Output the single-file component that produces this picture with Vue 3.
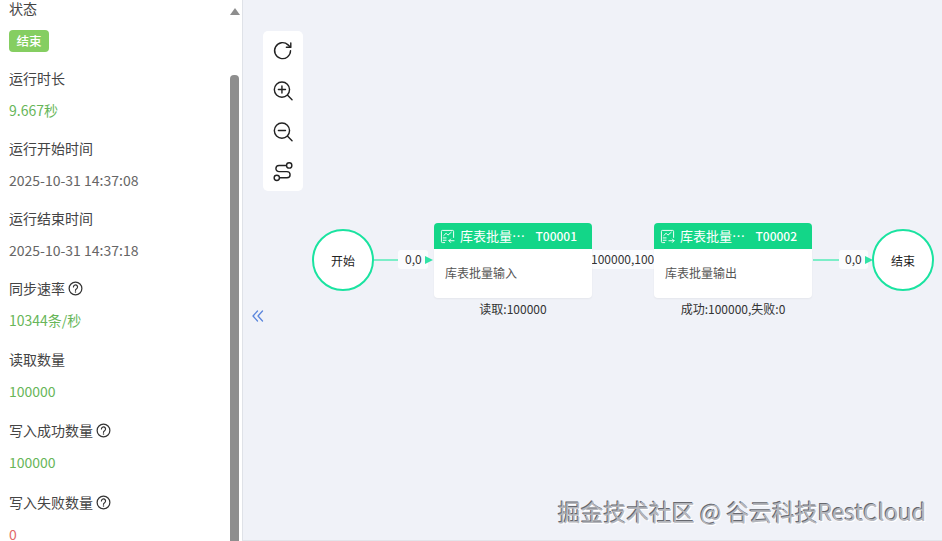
<script setup>
const metrics = [
  { label: '运行时长', value: '9.667秒', tone: 'green' },
  { label: '运行开始时间', value: '2025-10-31 14:37:08' },
  { label: '运行结束时间', value: '2025-10-31 14:37:18' },
  { label: '同步速率', value: '10344条/秒', tone: 'green', help: true, size: 'tall' },
  { label: '读取数量', value: '100000', tone: 'green', size: 'tall' },
  { label: '写入成功数量', value: '100000', tone: 'green', help: true, size: 'taller' },
  { label: '写入失败数量', value: '0', tone: 'red', help: true, size: 'tall' },
];
</script>

<template>
  <div class="page">
    <aside class="side">
      <div class="metric">
        <div class="label">状态</div>
        <div class="value"><span class="tag">结束</span></div>
      </div>
      <div v-for="item in metrics" :key="item.label" class="metric" :class="item.size">
        <div class="label">
          {{ item.label }}
          <svg v-if="item.help" class="help" viewBox="0 0 16 16" fill="none" stroke="#333" stroke-width="1.3">
            <circle cx="8" cy="8" r="6.8" />
            <path d="M5.8 6.4a2.2 2.2 0 1 1 3.4 1.8c-.8.5-1.2.9-1.2 1.7" stroke-linecap="round" />
            <circle cx="8" cy="11.8" r=".8" fill="#333" stroke="none" />
          </svg>
        </div>
        <div class="value" :class="item.tone">{{ item.value }}</div>
      </div>
      <i class="scroll-up"></i>
      <i class="scroll-thumb"></i>
    </aside>

    <main class="canvas">
      <div class="toolbar">
        <svg viewBox="0 0 24 24" fill="none" stroke="#222" stroke-width="1.6" stroke-linecap="round" stroke-linejoin="round">
          <path d="M20.5 12a9 9 0 1 1-2.8-6.5l2.8 2.6" />
          <path d="M20.8 3.2v5h-5" />
        </svg>
        <svg viewBox="0 0 24 24" fill="none" stroke="#222" stroke-width="1.6" stroke-linecap="round">
          <circle cx="10.8" cy="10.8" r="8.6" />
          <path d="M17.2 17.2l5 5M6.8 10.8h8M10.8 6.8v8" />
        </svg>
        <svg viewBox="0 0 24 24" fill="none" stroke="#222" stroke-width="1.6" stroke-linecap="round">
          <circle cx="10.8" cy="10.8" r="8.6" />
          <path d="M17.2 17.2l5 5M6.8 10.8h8" />
        </svg>
        <svg viewBox="0 0 24 24" fill="none" stroke="#222" stroke-width="1.6">
          <circle cx="19" cy="5" r="3" />
          <circle cx="5" cy="19" r="3" />
          <path d="M16 5H7.5a3.5 3.5 0 0 0 0 7h9a3.5 3.5 0 0 1 0 7H8" />
        </svg>
      </div>

      <svg class="collapse" viewBox="0 0 12 12" fill="none" stroke="#5b86dc" stroke-width="1.3" stroke-linecap="round" stroke-linejoin="round">
        <path d="M5.5 1L1 6l4.5 5M10.5 1L6 6l4.5 5" />
      </svg>

      <div class="circle start">开始</div>
      <i class="edge e1"></i>
      <span class="edge-label l1">0,0</span>
      <i class="arrow a1"></i>

      <span class="edge-label l2">100000,100000</span>

      <div class="node n1">
        <div class="node-head">
          <svg viewBox="0 0 16 16" fill="none" stroke="#fff" stroke-width="1" stroke-linecap="round" stroke-linejoin="round">
            <path d="M5 14.5H2.5a1 1 0 0 1-1-1v-11a1 1 0 0 1 1-1h11a1 1 0 0 1 1 1V9" />
            <path d="M4 7l2.5-2.5L8.5 6.5 12 3.5M3.5 9.5h3M3.5 12h3" />
            <path d="M15 12.5H9.5l1.8-1.8M9.5 12.5l1.8 1.8" />
          </svg>
          <span class="node-name">库表批量…</span>
          <span class="node-id">T00001</span>
        </div>
        <div class="node-body">库表批量输入</div>
        <div class="node-foot">读取:100000</div>
      </div>

      <div class="node n2">
        <div class="node-head">
          <svg viewBox="0 0 16 16" fill="none" stroke="#fff" stroke-width="1" stroke-linecap="round" stroke-linejoin="round">
            <path d="M5 14.5H2.5a1 1 0 0 1-1-1v-11a1 1 0 0 1 1-1h11a1 1 0 0 1 1 1V9" />
            <path d="M4 7l2.5-2.5L8.5 6.5 12 3.5M3.5 9.5h3M3.5 12h3" />
            <path d="M9.5 12.5H15l-1.8-1.8M15 12.5l-1.8 1.8" />
          </svg>
          <span class="node-name">库表批量…</span>
          <span class="node-id">T00002</span>
        </div>
        <div class="node-body">库表批量输出</div>
        <div class="node-foot">成功:100000,失败:0</div>
      </div>

      <i class="edge e2"></i>
      <span class="edge-label l3">0,0</span>
      <i class="arrow a2"></i>
      <div class="circle end">结束</div>

      <div class="watermark">掘金技术社区 @ 谷云科技RestCloud</div>
    </main>
  </div>
</template>

<style scoped>
.page {
  display: flex;
  width: 942px;
  height: 541px;
  overflow: hidden;
  font-family: "Noto Sans CJK SC", "Noto Sans", sans-serif;
  font-size: 14px;
  color: #333;
  background: #f0f2f8;
}

.side {
  position: relative;
  flex: none;
  width: 243px;
  height: 541px;
  padding: 0 0 0 9px;
  box-sizing: border-box;
  overflow: hidden;
  background: #fff;
  border-right: 1px solid #dfe2e8;
}

.metric {
  height: 70px;
}

.metric.tall {
  height: 71px;
}

.metric.taller {
  height: 72px;
}

.label {
  display: flex;
  align-items: center;
  gap: 3px;
  height: 17px;
  line-height: 17px;
  color: #444;
}

.value {
  margin-top: 14px;
  height: 19px;
  line-height: 19px;
  color: #666;
}

.value.green {
  color: #67b659;
}

.value.red {
  color: #e26a6a;
}

.help {
  width: 15px;
  height: 15px;
}

.tag {
  display: block;
  width: 40px;
  height: 22px;
  margin-top: -1px;
  line-height: 22px;
  border-radius: 4px;
  text-align: center;
  font-size: 12.5px;
  font-weight: 500;
  color: #fff;
  background: #85ce61;
}

.scroll-up {
  position: absolute;
  left: 230px;
  top: 8px;
  width: 0;
  height: 0;
  border-left: 5px solid transparent;
  border-right: 5px solid transparent;
  border-bottom: 7px solid #8e8e8e;
}

.scroll-thumb {
  position: absolute;
  left: 230px;
  top: 75px;
  bottom: 0;
  width: 9px;
  border-radius: 4px 4px 0 0;
  background: #8e8e8e;
}

.canvas {
  position: relative;
  flex: 1;
  height: 540px;
  border-bottom: 1px solid #e2e4ea;
}

.toolbar {
  position: absolute;
  left: 20px;
  top: 31px;
  display: flex;
  flex-direction: column;
  align-items: center;
  gap: 19px;
  width: 40px;
  padding: 9px 0 9px;
  box-sizing: border-box;
  height: 160px;
  border-radius: 5px;
  background: #fff;
}

.toolbar svg {
  width: 22px;
  height: 22px;
}

.collapse {
  position: absolute;
  left: 9px;
  top: 310px;
  width: 12px;
  height: 12px;
}

.circle {
  position: absolute;
  top: 229px;
  width: 62px;
  height: 62px;
  box-sizing: border-box;
  display: flex;
  align-items: center;
  justify-content: center;
  border: 2.5px solid #1ae3a0;
  border-radius: 50%;
  background: #fff;
  font-size: 12px;
  color: #222;
}

.start {
  left: 69px;
}

.end {
  left: 629px;
}

.edge {
  position: absolute;
  top: 259px;
  height: 2px;
  background: #7ceec8;
}

.e1 {
  left: 131px;
  width: 26px;
}

.e2 {
  left: 570px;
  width: 28px;
}

.arrow {
  position: absolute;
  top: 256px;
  width: 0;
  height: 0;
  border-top: 4px solid transparent;
  border-bottom: 4px solid transparent;
  border-left: 8px solid #2fe3a6;
}

.a1 {
  left: 182px;
}

.a2 {
  left: 622px;
}

.edge-label {
  position: absolute;
  top: 250px;
  height: 19px;
  line-height: 17px;
  padding: 0 6px;
  font-size: 12px;
  color: #333;
  background: #fbfcfe;
  border-radius: 3px;
  white-space: nowrap;
}

.l1 {
  left: 155px;
  padding-left: 7px;
}

.l2 {
  left: 348px;
  padding: 0;
}

.l3 {
  left: 596px;
}

.node {
  position: absolute;
  top: 223px;
  width: 158px;
}

.n1 {
  left: 191px;
}

.n2 {
  left: 411px;
}

.node-head {
  display: flex;
  align-items: center;
  height: 26px;
  padding: 0 15px 0 6px;
  box-sizing: border-box;
  border-radius: 4px 4px 0 0;
  font-size: 12px;
  line-height: 24px;
  color: #fff;
  background: #13d688;
}

.node-head svg {
  width: 15px;
  height: 15px;
  flex: none;
}

.node-name {
  margin-left: 5px;
  font-size: 13px;
}

.node-id {
  margin-left: auto;
  font-weight: 500;
}

.node-body {
  height: 49px;
  padding: 15px 11px 0;
  box-sizing: border-box;
  border-radius: 0 0 4px 4px;
  font-size: 12px;
  line-height: 17px;
  color: #555;
  background: #fff;
  box-shadow: 0 1px 2px rgba(0, 0, 0, 0.05);
}

.node-foot {
  margin-top: 2px;
  text-align: center;
  font-size: 12px;
  line-height: 18px;
  color: #333;
}

.watermark {
  position: absolute;
  left: 315px;
  top: 496px;
  font-size: 22.8px;
  line-height: 32px;
  white-space: nowrap;
  color: #b4b6bc;
  text-shadow: -1px -1px 0 #66686e, 1px 1px 0 #fff;
}
</style>

<style>
html,
body {
  margin: 0;
  background: #f0f2f8;
}
</style>
